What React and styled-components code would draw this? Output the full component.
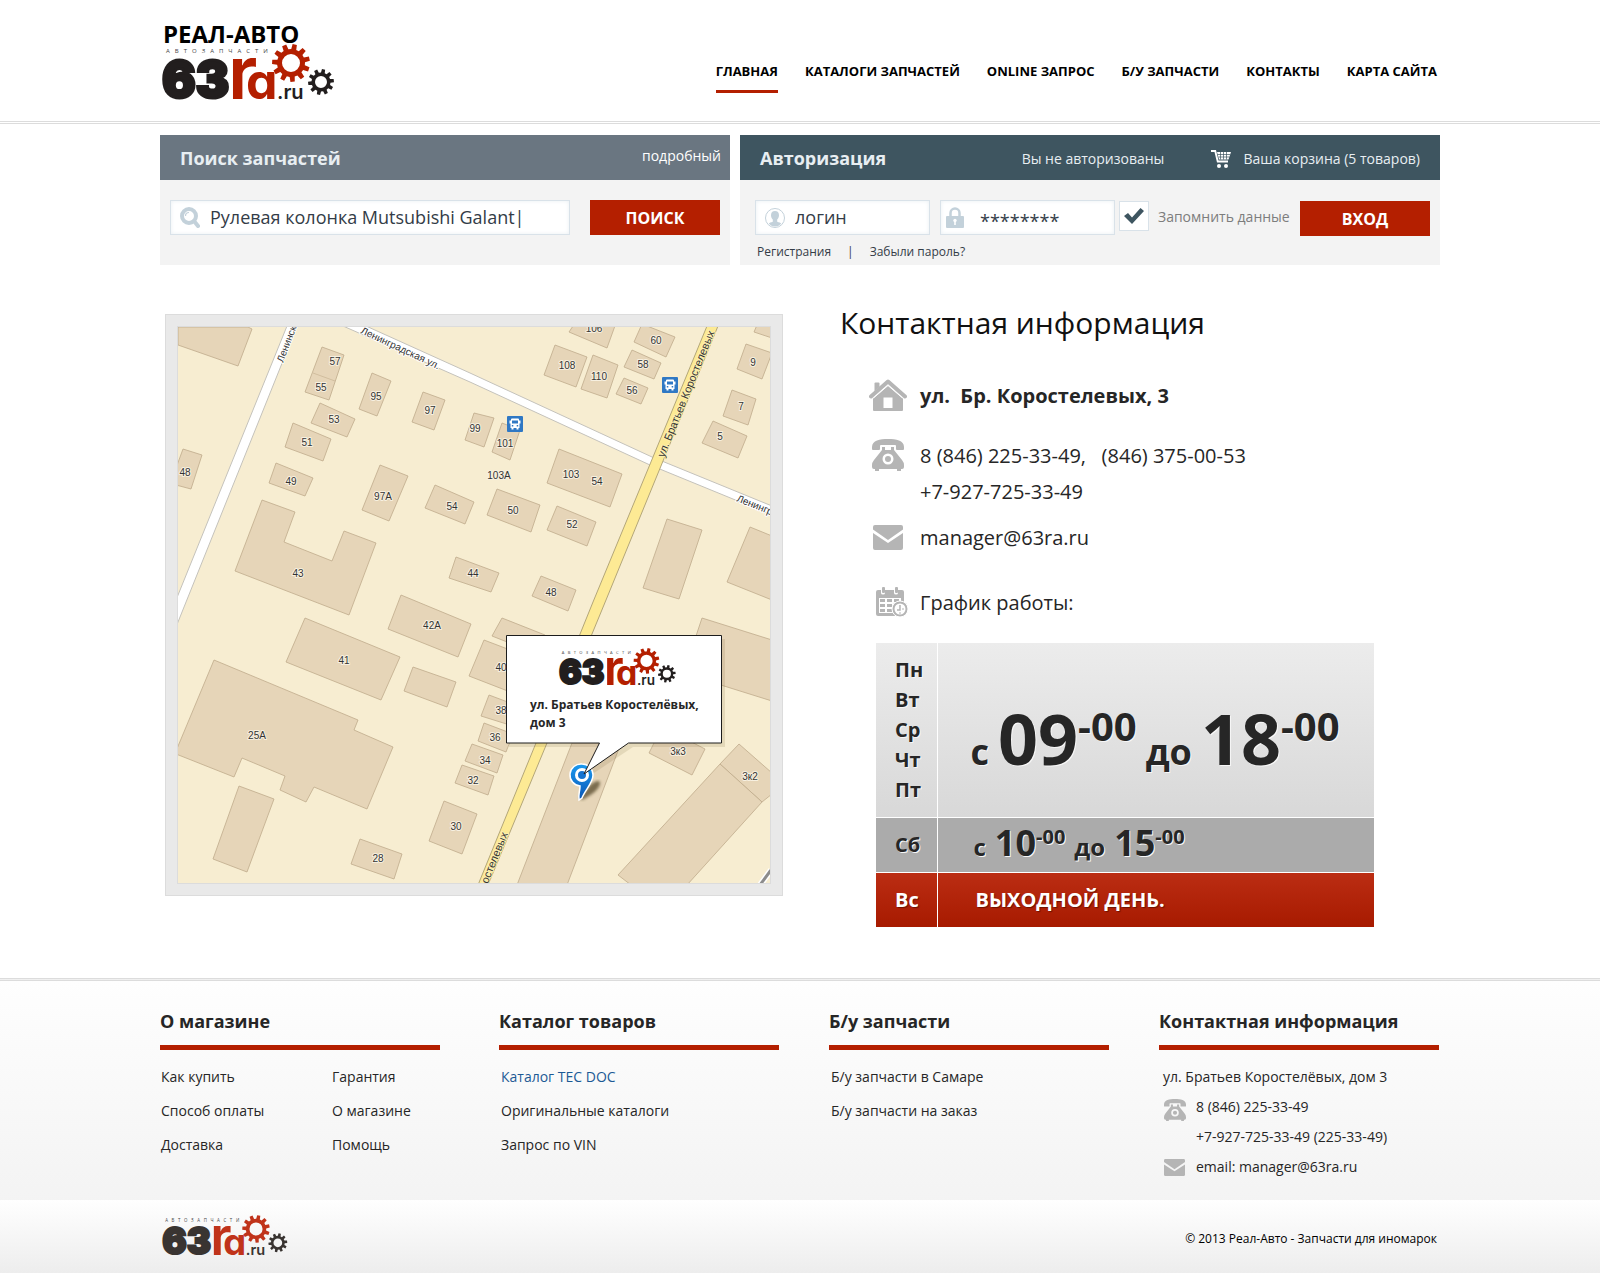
import styled, { createGlobalStyle, css } from "styled-components";

const GlobalStyle = createGlobalStyle`
	* {
		box-sizing: border-box;
	}
	body {
		margin: 0;
		background-color: #fff;
		color: #262626;
		font-family: "Open Sans", "Noto Sans", sans-serif;
		font-size: 14px;
	}
	a {
		color: inherit;
		text-decoration: none;
	}
	ul {
		list-style: none;
		margin: 0;
		padding: 0;
	}
	h1, h2, h3, p {
		margin: 0;
	}
	button, input {
		font-family: inherit;
	}
`;

const Container = styled.div`
	width: 100%;
	max-width: 1280px;
	margin: 0 auto;
`;

/* header */

const Header = styled.header`
	border-bottom: 3px double #dcdcdc;
	.inner {
		display: flex;
		justify-content: space-between;
		align-items: flex-start;
		height: 121px;
	}
`;

const Brand = styled.a`
	display: flex;
	flex-direction: column;
	padding: 20px 0 0 3px;
	.name {
		font-size: 24px;
		line-height: 28px;
		height: 24px;
		font-weight: 700;
		color: #000;
	}
`;

const Nav = styled.nav`
	display: flex;
	gap: 27px;
	padding: 60px 3px 0 0;
`;

const NavItem = styled.a`
	height: 33px;
	line-height: 22px;
	font-size: 13px;
	font-weight: 700;
	color: #000;
	border-bottom: 3px solid ${(p) => (p.$active ? "#b41f00" : "transparent")};
`;

/* search and login panels */

const Panels = styled(Container)`
	display: grid;
	grid-template-columns: 57fr 70fr;
	gap: 10px;
	padding-top: 11px;
`;

const Panel = styled.section`
	background-color: #f3f3f3;
	height: 130px;
`;

const PanelHead = styled.div`
	display: flex;
	align-items: center;
	height: 45px;
	padding: 0 20px;
	background-color: ${(p) => (p.$dark ? "#3e5560" : "#6a7681")};
	color: #e8eef2;
	h2 {
		flex: 1;
		font-size: 18px;
		line-height: 24px;
		font-weight: 700;
	}
	.more {
		align-self: flex-start;
		margin-right: -11px;
		line-height: 42px;
		color: #fff;
	}
	.status,
	.cart {
		padding-top: 2px;
	}
	.cart {
		display: flex;
		align-items: center;
		gap: 12px;
		margin-left: 47px;
	}
`;

const PanelBody = styled.form`
	display: flex;
	align-items: flex-start;
	padding: 20px 10px 0 ${(p) => p.$left}px;
`;

const Field = styled.label`
	display: flex;
	align-items: center;
	flex: 0 1 175px;
	min-width: 0;
	height: 35px;
	padding-left: 9px;
	gap: 10px;
	background-color: #fff;
	border: 1px solid #d9e2e9;
	box-shadow: inset 0 0 4px #e9eff3;
	svg {
		flex: none;
	}
	input {
		flex: 1;
		min-width: 0;
		padding: 0 0 2px;
		border: 0;
		outline: 0;
		background: none;
		font-size: 18px;
		line-height: 24px;
		color: #333c47;
	}
`;

const SearchField = styled(Field)`
	flex: 1;
`;

const PasswordField = styled(Field)`
	margin-left: 10px;
	padding-left: 5px;
	gap: 16px;
	input {
		padding: 6px 0 0;
	}
`;

const Button = styled.button`
	flex: none;
	width: 130px;
	height: 35px;
	padding: 0;
	border: 0;
	background-color: #b41f00;
	color: #fff;
	font-size: 16px;
	font-weight: 700;
	cursor: pointer;
`;

const SearchButton = styled(Button)`
	margin-left: 20px;
`;

const LoginButton = styled(Button)`
	margin-top: 1px;
`;

const Remember = styled.label`
	display: flex;
	align-items: center;
	gap: 9px;
	margin: 1px auto 0 4px;
	color: #7d7d7d;
	.box {
		display: grid;
		width: 30px;
		height: 30px;
	}
	.box > * {
		grid-area: 1 / 1;
		place-self: center;
	}
	input {
		appearance: none;
		width: 30px;
		height: 30px;
		margin: 0;
		background-color: #fff;
		border: 1px solid #d9e2e9;
	}
	svg {
		pointer-events: none;
	}
`;

const LoginLinks = styled.div`
	display: flex;
	gap: 16px;
	padding: 8px 0 0 17px;
	font-size: 12px;
	line-height: 16px;
	color: #333c47;
`;

/* main content */

const Main = styled(Container)`
	display: flex;
	align-items: flex-start;
	gap: 57px;
	padding: 38px 0 51px 5px;
`;

const MapFrame = styled.div`
	flex: 0 1 618px;
	margin-top: 11px;
	padding: 11px;
	background-color: #e9e9e9;
	border: 1px solid #dcdcdc;
	svg.map {
		display: block;
		width: 100%;
		height: auto;
		border: 1px solid #dcdcdc;
		font-family: "Liberation Sans", sans-serif;
		font-size: 10px;
	}
`;

const Info = styled.section`
	flex: 1;
	h1 {
		font-size: 30px;
		line-height: 40px;
		font-weight: 400;
		color: #111;
	}
`;

const ContactList = styled.ul`
	padding: 35px 0 0 28px;
`;

const ContactRow = styled.li`
	display: flex;
	gap: 12px;
	margin-bottom: ${(p) => p.$gap}px;
	font-size: 20px;
	line-height: 36px;
	font-weight: ${(p) => (p.$bold ? 700 : 400)};
	white-space: pre-wrap;
	.icon {
		display: flex;
		align-items: center;
		justify-content: center;
		width: 40px;
		height: 34px;
	}
`;

const Schedule = styled.table`
	width: 498px;
	max-width: calc(100% - 36px);
	margin-left: 36px;
	border-collapse: collapse;
	font-weight: 700;
	text-shadow: 1px 1px 0 #f7f7f7;
	th,
	td {
		padding: 0;
		text-align: left;
	}
	th {
		width: 61px;
		padding-left: 19px;
		font-size: 20px;
		line-height: 30px;
		border-right: 1px solid #fff;
	}
`;

const rowLooks = {
	week: css`
		height: 174px;
		background: linear-gradient(#ececec, #d8d8d8);
	`,
	saturday: css`
		height: 55px;
		background: #ababab;
	`,
	sunday: css`
		height: 55px;
		background: linear-gradient(#bb2d13, #a71a00);
		color: #fff;
		text-shadow: 1px 1px 1px #6e1200;
	`,
};

const ScheduleRow = styled.tr`
	${(p) => rowLooks[p.$look]}
	& + & {
		border-top: 1px solid #fff;
	}
	& + & > * {
		padding-top: 2px;
	}
	.note {
		padding-left: 38px;
		font-size: 20px;
	}
`;

const Hours = styled.div`
	display: flex;
	align-items: baseline;
	gap: 9px;
	padding-left: ${(p) => (p.$big ? 33 : 36)}px;
	font-size: ${(p) => (p.$big ? 36 : 24)}px;
	line-height: ${(p) => (p.$big ? 80 : 40)}px;
	padding-top: ${(p) => (p.$big ? 30 : 0)}px;
	.hour {
		font-size: ${(p) => (p.$big ? 70 : 36)}px;
	}
	sup {
		font-size: ${(p) => (p.$big ? 40 : 20)}px;
		line-height: 0;
		vertical-align: ${(p) => (p.$big ? 24 : 12)}px;
	}
`;

/* footer */

const Footer = styled.footer`
	border-top: 3px double #dcdcdc;
	background: linear-gradient(#fefefe, #f0f0f0);
`;

const FooterGrid = styled(Container)`
	display: grid;
	grid-template-columns: 339fr 330fr 330fr 281fr;
	min-height: 219px;
	padding-top: 28px;
`;

const FooterColumn = styled.section`
	width: 100%;
	max-width: 280px;
	h3 {
		padding-bottom: 12px;
		border-bottom: 5px solid #b41f00;
		font-size: 18px;
		line-height: 24px;
		font-weight: 700;
	}
	.lists {
		display: grid;
		grid-template-columns: ${(p) => (p.$split ? "171px 1fr" : "1fr")};
		padding: 10px 0 0 ${(p) => (p.$split ? 1 : 2)}px;
		line-height: 34px;
	}
	.highlight {
		color: #1c5a95;
	}
`;

const FooterContacts = styled.ul`
	padding: 12px 0 0 4px;
	line-height: 30px;
	li {
		display: flex;
		gap: 10px;
	}
	.icon {
		flex: none;
		width: 23px;
		padding-left: 1px;
	}
	svg {
		display: block;
		margin-top: 7px;
	}
`;

const BottomBar = styled.div`
	background: linear-gradient(#fff, #ededed);
	.inner {
		display: flex;
		justify-content: space-between;
		align-items: flex-start;
		height: 73px;
		padding: 15px 3px 0;
	}
	p {
		padding-top: 15px;
		font-size: 12px;
		color: #000;
	}
`;

/* drawings */

const gearPath = (cx, cy, teeth, outer, root, hole) => {
	const step = (Math.PI * 2) / teeth;
	const at = (r, a) =>
		`${(cx + r * Math.cos(a)).toFixed(2)} ${(cy + r * Math.sin(a)).toFixed(2)}`;
	let d = "";
	for (let i = 0; i < teeth; i++) {
		const a = i * step - Math.PI / 2 + 0.2;
		d += `${i ? "L" : "M"}${at(root, a - step * 0.32)}L${at(outer, a - step * 0.2)}`;
		d += `L${at(outer, a + step * 0.2)}L${at(root, a + step * 0.32)}`;
	}
	return `${d}Z M${cx - hole} ${cy}a${hole} ${hole} 0 1 0 ${hole * 2} 0a${hole} ${hole} 0 1 0 ${-hole * 2} 0Z`;
};

const LogoSvg = styled.svg`
	overflow: visible;
	font-family: Inter, "Open Sans", sans-serif;
	.tagline {
		font-family: "Open Sans", sans-serif;
		font-size: 6px;
		letter-spacing: 5px;
		fill: #444;
	}
	.number {
		font-size: 50px;
		font-weight: 900;
	}
	.letter {
		font-size: 74px;
		font-weight: 600;
	}
	.small-letter {
		font-size: 50px;
		font-weight: 700;
		font-feature-settings: "cv11";
	}
	.zone {
		font-size: 20px;
		font-weight: 600;
	}
`;

const Logo = ({ width, faded, ...rest }) => {
	const dark = faded ? "#393431" : "#221e1e";
	const red = faded ? "#c0331a" : "#b41f00";
	return (
		<LogoSvg width={width} height={Math.round((width * 56) / 172)} viewBox="0 0 172 56" {...rest}>
			<text className="tagline" x="3" y="9">
				АВТОЗАПЧАСТИ
			</text>
			<text className="number" x="-1" y="53" fill={dark} stroke={dark} strokeWidth="3">
				63
			</text>
			<text className="letter" x="65" y="55" fill={red}>
				r
			</text>
			<text className="small-letter" x="83" y="55" fill={red}>
				a
			</text>
			<text className="zone" x="114" y="55" fill={dark}>
				.ru
			</text>
			<path d={gearPath(128, 19, 11, 19, 14, 9)} fill={red} fillRule="evenodd" />
			<path d={gearPath(158, 38, 10, 13, 9.5, 6)} fill={dark} fillRule="evenodd" />
		</LogoSvg>
	);
};

const SearchIcon = () => (
	<svg width="20" height="21" viewBox="0 0 20 21" fill="none" stroke="#c3d1da">
		<circle cx="9" cy="9" r="7" strokeWidth="4" />
		<path d="M5.500 9a3.500 3.500 0 0 1 3.500-3.500" strokeWidth="1.200" />
		<path d="M14 14l4 5" strokeWidth="4" strokeLinecap="round" />
	</svg>
);

const UserIcon = () => (
	<svg width="20" height="20" viewBox="0 0 20 20">
		<circle cx="10" cy="10" r="9.500" fill="#fff" stroke="#c3d1da" />
		<path
			d="M10 3c2.600 0 4 1.600 4 4.200 0 1.900-.8 3.400-1.800 4.300v2.200c2 .5 3.300 1 4 2A8.500 8.500 0 0 1 10 18.500a8.500 8.500 0 0 1-6.200-2.800c.7-1 2-1.500 4-2v-2.200C6.800 10.600 6 9.100 6 7.200 6 4.600 7.400 3 10 3z"
			fill="#c3d1da"
		/>
	</svg>
);

const LockIcon = () => (
	<svg width="18" height="22" viewBox="0 0 18 22">
		<path d="M4.500 11V6a4.500 4.500 0 0 1 9 0v5" fill="none" stroke="#c3d1da" strokeWidth="2.500" />
		<rect y="9" width="18" height="12" rx="1" fill="#c3d1da" />
		<circle cx="9" cy="13.500" r="1.700" fill="#fff" />
		<path d="M8.200 14h1.600v4H8.200z" fill="#fff" />
	</svg>
);

const CheckIcon = () => (
	<svg width="20" height="16" viewBox="0 0 20 16">
		<path d="M0 8l4-3 4 4.500L16.500 0 20 3 8 16z" fill="#3e5560" />
	</svg>
);

const CartIcon = () => (
	<svg width="20" height="18" viewBox="0 0 20 18" fill="#fff">
		<path d="M0 0h5l2.500 10.500H17V12.500H6L3.500 2H0z" />
		<path d="M6 2h14l-2.500 7.500H8z" />
		<path d="M6.500 4.500h12.500M7.500 7h11M9.500 2v7.500M12.500 2v7.500M15.500 2v7.500" stroke="#3e5560" strokeWidth=".7" />
		<circle cx="8" cy="16" r="2" />
		<circle cx="15" cy="16" r="2" />
	</svg>
);

const HouseIcon = () => (
	<svg width="38" height="32" viewBox="0 0 38 32" fill="#b5b5b5">
		<path d="M5.500 12V4.500q0-1 1-1h3q1 0 1 1V8z" />
		<path
			d="M2 17.500L19 2.500l17 15"
			fill="none"
			stroke="#b5b5b5"
			strokeWidth="4"
			strokeLinecap="round"
			strokeLinejoin="round"
		/>
		<path d="M4 19.500L19 6.500l15 13V31q0 1-1 1H5q-1 0-1-1z M14.500 18.500v10.500h9V18.500z" fillRule="evenodd" />
		<path d="M4.500 19L19 6.500 33.500 19" fill="none" stroke="#fff" strokeWidth="1" />
	</svg>
);

const PhoneIcon = ({ size = 32 }) => (
	<svg width={size} height={size} viewBox="0 0 32 32" fill="#b5b5b5">
		<path d="M16 0c8 0 16 1.500 16 8v2q0 1-1 1h-6q-1 0-1-1V7q0-1-1-1H9q-1 0-1 1v3q0 1-1 1H1q-1 0-1-1V8c0-6.500 8-8 16-8z" />
		<path
			d="M10 8h3v3h6V8h3v3l8 10q2 2.500 2 5v2q0 2-2 2h-1v2h-4v-2H7v2H3v-2H2q-2 0-2-2v-2q0-2.500 2-5l8-10z M16 14.500a5.500 5.500 0 1 0 0 11 5.500 5.500 0 0 0 0-11z"
			fillRule="evenodd"
		/>
		<circle cx="16" cy="20" r="3" />
	</svg>
);

const MailIcon = ({ width = 30, height = 25 }) => (
	<svg width={width} height={height} viewBox="0 0 30 25" fill="#b5b5b5" preserveAspectRatio="none">
		<path d="M2 0h26q2 0 2 2v2.500L15 15 0 4.500V2q0-2 2-2z" />
		<path d="M0 8l15 10L30 8v15q0 2-2 2H2q-2 0-2-2z" />
	</svg>
);

const CalendarIcon = () => (
	<svg width="40" height="30" viewBox="-8 0 40 30">
		<path
			d="M2 3h3v3q0 1.500 2 1.500T9 6V3h9v3q0 1.500 2 1.500T22 6V3h4q2 0 2 2v23q0 1-1 1H2q-2 0-2-2V5q0-2 2-2z"
			fill="#b5b5b5"
		/>
		<rect x="6" y="0" width="3" height="6" rx="1" fill="#b5b5b5" />
		<rect x="19" y="0" width="3" height="6" rx="1" fill="#b5b5b5" />
		<path d="M3 11h22v15H3z" fill="#fff" />
		<path
			d="M4 12h5v3H4zM11 12h5v3h-5zM18 12h5v3h-5zM4 17h5v3H4zM11 17h5v3h-5zM4 22h5v3H4zM11 22h5v3h-5z"
			fill="#b5b5b5"
		/>
		<circle cx="24" cy="22" r="8" fill="#b5b5b5" stroke="#fff" />
		<circle cx="24" cy="22" r="5.500" fill="#fff" />
		<path d="M24 18v5h-3" fill="none" stroke="#b5b5b5" strokeWidth="1.500" />
		<path d="M26 22h2M24 25v2" stroke="#b5b5b5" />
	</svg>
);

const buildings = [
	"0,0 70,0 74,2 60,39 0,18",
	"144,20 166,28 151,73 127,65",
	"142,76 177,92 169,110 133,96",
	"115,96 153,112 145,134 107,120",
	"194,46 213,54 199,89 181,82",
	"245,65 267,73 256,103 234,95",
	"98,136 135,151 127,169 91,156",
	"5,122 24,128 13,162 -2,158 -2,141",
	"202,138 230,149 211,194 184,183",
	"257,158 296,175 287,197 247,181",
	"84,173 117,185 106,215 154,234 166,204 198,216 171,288 57,244",
	"278,230 321,246 313,265 271,251",
	"296,86 316,91 306,120 287,113",
	"324,96 342,103 332,133 314,125",
	"397,-4 391,5 429,21 438,-4",
	"377,18 409,30 398,60 366,48",
	"415,28 440,38 429,71 403,62",
	"464,-3 456,15 488,30 497,10",
	"454,23 483,36 476,52 446,40",
	"446,51 470,61 463,77 438,67",
	"579,-2 576,5 594,11 594,-2",
	"568,17 594,26 584,52 559,42",
	"554,63 578,72 570,98 545,89",
	"535,94 569,109 560,131 524,116",
	"381,122 444,147 432,180 369,156",
	"319,162 362,178 353,205 309,188",
	"379,179 418,195 409,219 369,203",
	"363,249 398,263 390,284 354,269",
	"489,192 524,203 501,272 465,261",
	"572,200 594,209 594,273 549,255",
	"223,268 293,297 280,330 210,302",
	"127,291 222,330 203,373 108,335",
	"235,340 278,355 269,380 226,364",
	"36,333 180,393 176,403 215,420 189,482 136,460 128,475 102,463 107,449 64,431 56,450 -2,427 -2,424",
	"61,459 96,472 69,545 35,532",
	"182,512 224,527 216,552 173,537",
	"266,474 299,487 284,527 251,514",
	"324,291 367,308 367,330 314,309",
	"306,313 340,326 340,368 291,349",
	"311,368 335,377 335,399 303,389",
	"306,396 335,407 328,425 300,414",
	"294,417 325,428 319,446 287,434",
	"284,438 316,449 310,468 277,456",
	"394,416 443,416 389,558 339,558",
	"480,408 471,426 514,448 527,422 500,408",
	"561,417 594,446 594,467 584,475 542,437",
	"542,437 584,475 509,558 453,558 440,548",
	"524,291 594,313 594,374 530,354 515,318",
];

const houseNumbers = [
	[157, 34, "57"],
	[143, 60, "55"],
	[198, 69, "95"],
	[156, 92, "53"],
	[252, 83, "97"],
	[129, 115, "51"],
	[297, 101, "99"],
	[7, 145, "48"],
	[113, 154, "49"],
	[205, 169, "97А"],
	[274, 179, "54"],
	[120, 246, "43"],
	[295, 246, "44"],
	[416, 1, "106"],
	[478, 13, "60"],
	[389, 38, "108"],
	[421, 49, "110"],
	[465, 37, "58"],
	[454, 63, "56"],
	[575, 35, "9"],
	[563, 79, "7"],
	[542, 109, "5"],
	[327, 116, "101"],
	[321, 148, "103А"],
	[393, 147, "103"],
	[419, 154, "54"],
	[335, 183, "50"],
	[394, 197, "52"],
	[373, 265, "48"],
	[254, 298, "42А"],
	[166, 333, "41"],
	[79, 408, "25А"],
	[200, 531, "28"],
	[278, 499, "30"],
	[295, 453, "32"],
	[323, 340, "40"],
	[323, 383, "38"],
	[317, 410, "36"],
	[307, 433, "34"],
	[500, 424, "3к3"],
	[572, 449, "3к2"],
];

const busStops = [
	[484, 50],
	[329, 89],
];

const MapText = styled.text`
	fill: #333;
	stroke: ${(p) => p.$halo || "#f7f0e0"};
	stroke-width: 2px;
	stroke-linejoin: round;
	paint-order: stroke;
`;

const StreetMap = () => (
	<svg className="map" viewBox="0 0 592 556" role="img" aria-label="Схема проезда">
		<defs>
			<linearGradient id="pin" x1="0" y1="0" x2="0" y2="1">
				<stop offset="0" stopColor="#1b9af0" />
				<stop offset="1" stopColor="#0a55b5" />
			</linearGradient>
			<filter id="soft">
				<feGaussianBlur stdDeviation="1.500" />
			</filter>
		</defs>
		<rect width="592" height="556" fill="#f7edd1" />
		<g fill="#e6d5b8" stroke="#bfab8c" strokeWidth=".8">
			{buildings.map((points) => (
				<polygon key={points} points={points} />
			))}
		</g>
		<path d="M135 46L157 54" stroke="#cbb898" strokeWidth=".8" />
		<path d="M593 543L582 558" stroke="#fff" strokeWidth="6" />
		<path d="M593 543L582 558" stroke="#8c8c8c" strokeWidth="3" />
		<g fill="#fff" stroke="#c4c2bb">
			<polygon points="109,-1 119,-1 -2,300 -2,273" />
			<polygon points="165,-1 188,-1 292,46 474,130 594,179 594,188 472,138 292,55" />
		</g>
		<polygon
			points="529,-1 540,-1 485,134 428,273 369,416 310,558 300,558 358,416 415,275 475,130"
			fill="#fdea94"
			stroke="#b3a678"
		/>
		<MapText $halo="#fff" transform="translate(105 36) rotate(-69)">
			Ленинская
		</MapText>
		<MapText $halo="#fff" transform="translate(182 6) rotate(25)">
			Ленинградская ул.
		</MapText>
		<MapText $halo="#fff" transform="translate(558 174) rotate(22)">
			Ленинградская ул.
		</MapText>
		<g fontSize="11">
			<MapText $halo="#fbeeb0" transform="translate(486 131) rotate(-68)">
				ул. Братьев Коростелевых
			</MapText>
			<MapText $halo="#fbeeb0" textAnchor="end" transform="translate(330 507) rotate(-68)">
				Коростелевых
			</MapText>
		</g>
		<g textAnchor="middle">
			{houseNumbers.map(([x, y, label]) => (
				<MapText key={`${x}-${y}`} x={x} y={y + 4}>
					{label}
				</MapText>
			))}
		</g>
		{busStops.map(([x, y]) => (
			<g key={x} transform={`translate(${x} ${y})`}>
				<rect width="16" height="16" rx="1" fill="#2f78c4" />
				<path
					d="M4 3.500q0-1 1-1h6q1 0 1 1v1h1.500v3H12.500V12H11.500v1.500h-2V12h-3v1.500h-2V12h-1V7.500H2.500v-3H4z M5 4.500v3h6v-3z M4.800 9v1.500h1.500V9z M9.700 9v1.500h1.500V9z"
					fill="#fff"
					fillRule="evenodd"
				/>
			</g>
		))}

		<rect x="331" y="312" width="216" height="108" fill="#7a6a3c" opacity=".16" />
		<path d="M425 420h30l-45 30z" fill="#7a6a3c" opacity=".16" />
		<path d="M402 471l10-13q8-6 10-3 1 8-18 18z" fill="#4d4020" opacity=".7" filter="url(#soft)" />
		<path
			d="M404 437a11 11 0 0 1 11 11c0 8-8 15-11 23l-3 2c-1-5 1-9 1-14a11 11 0 0 1 2-22z"
			fill="url(#pin)"
			stroke="#fff"
			strokeWidth="1.500"
		/>
		<circle cx="404" cy="448" r="5.500" fill="#1673cf" stroke="#fff" strokeWidth="3" />
		<path d="M328.500 308.500h215v107.500h-93L406 447l15.500-31h-93z" fill="#fff" stroke="#1c1c1c" />
		<Logo width={118} x="381" y="321" />
		<g fontFamily="Open Sans, sans-serif" fontSize="12" fontWeight="700" fill="#262626">
			<text x="352" y="382">
				ул. Братьев Коростелёвых,
			</text>
			<text x="352" y="400">
				дом 3
			</text>
		</g>
	</svg>
);

const menu = ["ГЛАВНАЯ", "КАТАЛОГИ ЗАПЧАСТЕЙ", "ONLINE ЗАПРОС", "Б/У ЗАПЧАСТИ", "КОНТАКТЫ", "КАРТА САЙТА"];

const footerColumns = [
	{
		title: "О магазине",
		lists: [
			["Как купить", "Способ оплаты", "Доставка"],
			["Гарантия", "О магазине", "Помощь"],
		],
	},
	{
		title: "Каталог товаров",
		lists: [["Каталог TEC DOC", "Оригинальные каталоги", "Запрос по VIN"]],
	},
	{
		title: "Б/у запчасти",
		lists: [["Б/у запчасти в Самаре", "Б/у запчасти на заказ"]],
	},
];

const OpeningHours = ({ big, from, to }) => (
	<Hours $big={big}>
		<span>с</span>
		<span>
			<span className="hour">{from}</span>
			<sup>-00</sup>
		</span>
		<span>до</span>
		<span>
			<span className="hour">{to}</span>
			<sup>-00</sup>
		</span>
	</Hours>
);

export default function App() {
	return (
		<>
			<GlobalStyle />
			<Header>
				<Container className="inner">
					<Brand href="#">
						<span className="name">РЕАЛ-АВТО</span>
						<Logo width={172} />
					</Brand>
					<Nav>
						{menu.map((item, i) => (
							<NavItem key={item} href="#" $active={i === 0}>
								{item}
							</NavItem>
						))}
					</Nav>
				</Container>
			</Header>

			<Panels>
				<Panel>
					<PanelHead>
						<h2>Поиск запчастей</h2>
						<a className="more" href="#">
							подробный
						</a>
					</PanelHead>
					<PanelBody $left={10}>
						<SearchField>
							<SearchIcon />
							<input aria-label="Поиск запчастей" defaultValue="Рулевая колонка Mutsubishi Galant|" />
						</SearchField>
						<SearchButton type="button">ПОИСК</SearchButton>
					</PanelBody>
				</Panel>
				<Panel>
					<PanelHead $dark>
						<h2>Авторизация</h2>
						<span className="status">Вы не авторизованы</span>
						<a className="cart" href="#">
							<CartIcon />
							Ваша корзина (5 товаров)
						</a>
					</PanelHead>
					<PanelBody $left={15}>
						<Field>
							<UserIcon />
							<input aria-label="Логин" defaultValue="логин" />
						</Field>
						<PasswordField>
							<LockIcon />
							<input aria-label="Пароль" defaultValue="********" />
						</PasswordField>
						<Remember>
							<span className="box">
								<input type="checkbox" defaultChecked />
								<CheckIcon />
							</span>
							Запомнить данные
						</Remember>
						<LoginButton type="button">ВХОД</LoginButton>
					</PanelBody>
					<LoginLinks>
						<a href="#">Регистрания</a>
						<span>|</span>
						<a href="#">Забыли пароль?</a>
					</LoginLinks>
				</Panel>
			</Panels>

			<Main as="main">
				<MapFrame>
					<StreetMap />
				</MapFrame>
				<Info>
					<h1>Контактная информация</h1>
					<ContactList>
						<ContactRow $gap={24} $bold>
							<span className="icon">
								<HouseIcon />
							</span>
							<span>{"ул.  Бр. Коростелевых, 3"}</span>
						</ContactRow>
						<ContactRow $gap={10}>
							<span className="icon">
								<PhoneIcon />
							</span>
							<span>{"8 (846) 225-33-49,   (846) 375-00-53\n+7-927-725-33-49"}</span>
						</ContactRow>
						<ContactRow $gap={29}>
							<span className="icon">
								<MailIcon />
							</span>
							<a href="mailto:manager@63ra.ru">manager@63ra.ru</a>
						</ContactRow>
						<ContactRow $gap={22}>
							<span className="icon">
								<CalendarIcon />
							</span>
							<span>График работы:</span>
						</ContactRow>
					</ContactList>
					<Schedule>
						<tbody>
							<ScheduleRow $look="week">
								<th scope="row">
									{["Пн", "Вт", "Ср", "Чт", "Пт"].map((day) => (
										<div key={day}>{day}</div>
									))}
								</th>
								<td>
									<OpeningHours big from="09" to="18" />
								</td>
							</ScheduleRow>
							<ScheduleRow $look="saturday">
								<th scope="row">Сб</th>
								<td>
									<OpeningHours from="10" to="15" />
								</td>
							</ScheduleRow>
							<ScheduleRow $look="sunday">
								<th scope="row">Вс</th>
								<td className="note">ВЫХОДНОЙ ДЕНЬ.</td>
							</ScheduleRow>
						</tbody>
					</Schedule>
				</Info>
			</Main>

			<Footer>
				<FooterGrid>
					{footerColumns.map(({ title, lists }) => (
						<FooterColumn key={title} $split={lists.length > 1}>
							<h3>{title}</h3>
							<div className="lists">
								{lists.map((items) => (
									<ul key={items[0]}>
										{items.map((item) => (
											<li key={item}>
												<a href="#" className={item === "Каталог TEC DOC" ? "highlight" : undefined}>
													{item}
												</a>
											</li>
										))}
									</ul>
								))}
							</div>
						</FooterColumn>
					))}
					<FooterColumn>
						<h3>Контактная информация</h3>
						<FooterContacts>
							<li>ул. Братьев Коростелёвых, дом 3</li>
							<li>
								<span className="icon">
									<PhoneIcon size={22} />
								</span>
								<span>
									8 (846) 225-33-49
									<br />
									+7-927-725-33-49 (225-33-49)
								</span>
							</li>
							<li>
								<span className="icon">
									<MailIcon width={21} height={17} />
								</span>
								<a href="mailto:manager@63ra.ru">email: manager@63ra.ru</a>
							</li>
						</FooterContacts>
					</FooterColumn>
				</FooterGrid>
				<BottomBar>
					<Container className="inner">
						<Logo width={125} faded />
						<p>© 2013 Реал-Авто - Запчасти для иномарок</p>
					</Container>
				</BottomBar>
			</Footer>
		</>
	);
}
